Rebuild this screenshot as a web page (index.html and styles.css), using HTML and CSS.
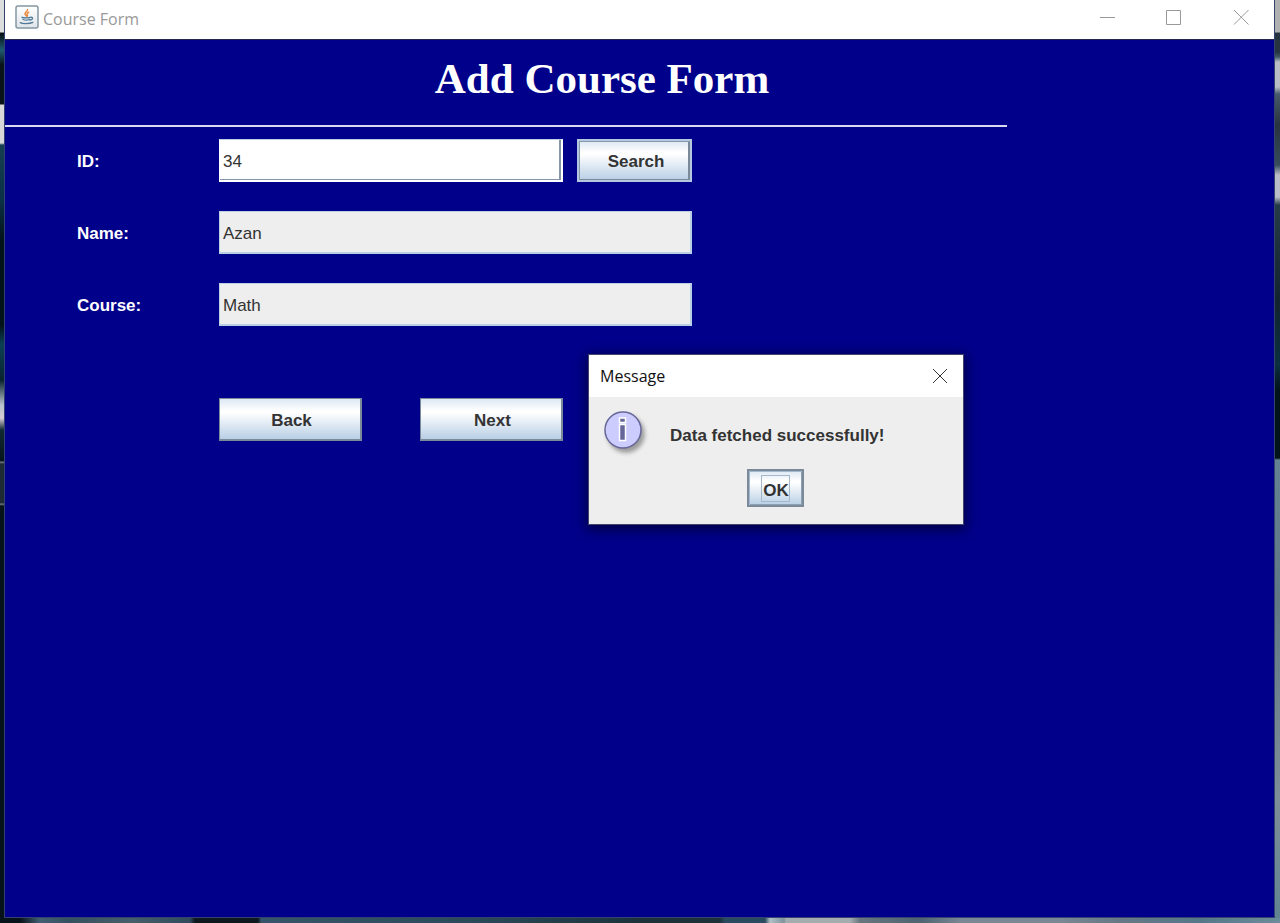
FILE: index.html
```html
<!DOCTYPE html>
<html lang="en">
<head>
<meta charset="utf-8">
<title>Course Form</title>
<link rel="stylesheet" href="styles.css">
</head>
<body>
<main class="window">
  <header class="titlebar">
    <svg class="java" width="24" height="24" viewBox="0 0 24 24" aria-hidden="true">
      <defs><linearGradient id="tile" x1="0" y1="0" x2="0" y2="1"><stop offset="0" stop-color="#fff"/><stop offset="1" stop-color="#dfe5ea"/></linearGradient></defs>
      <rect x="1" y="1" width="22" height="22" rx="2" fill="url(#tile)" stroke="#8496a2" stroke-width="1.5"/>
      <g fill="none" stroke-linecap="round">
        <path d="M12.500 4.500c.5 2-3 2.600-2.500 4.600.3 1 1.200 1.300 1.400 2M13.800 7.300c-1.600.7-2.200 1.500-1.500 2.400.4.6.3 1-.1 1.500" stroke="#e98b3c" stroke-width="1.500"/>
        <path d="M7 12.300c1.500.7 7 .7 8.500 0M8 14.500c1.800.6 5 .6 6.700 0M15.800 12.300c2.600-.4 2.400 2.200-.7 2.800M5.200 17.600c1.400 1.300 9.500 1.500 12.600-.2" stroke="#517b99" stroke-width="1.300"/>
      </g>
    </svg>
    <span class="caption">Course Form</span>
    <button class="control" type="button" aria-label="Minimize"><svg width="16" height="16" viewBox="0 0 16 16"><path d="M1 8.500h15"/></svg></button>
    <button class="control" type="button" aria-label="Maximize"><svg width="16" height="16" viewBox="0 0 16 16"><path d="M.5 1.500h14v14H.5z"/></svg></button>
    <button class="control" type="button" aria-label="Close"><svg width="16" height="16" viewBox="0 0 16 16"><path d="M1 1l14.500 14.500M15.500 1L1 15.500"/></svg></button>
  </header>
  <h1 class="heading">Add Course Form</h1>
  <form class="form">
    <label for="id">ID:</label>
    <div class="search-row">
      <input class="field id-field" id="id" type="text" value="34">
      <button class="button search" type="button">Search</button>
    </div>
    <label for="name">Name:</label>
    <input class="field" id="name" type="text" value="Azan" readonly>
    <label for="course">Course:</label>
    <input class="field" id="course" type="text" value="Math" readonly>
    <div class="actions">
      <button class="button" type="button">Back</button>
      <button class="button" type="button">Next</button>
    </div>
  </form>
</main>
<section class="dialog" role="dialog" aria-labelledby="dialog-title">
  <header class="dialog-bar">
    <span id="dialog-title">Message</span>
    <button class="dialog-close" type="button" aria-label="Close message"><svg width="16" height="16" viewBox="0 0 16 16"><path d="M1 1l14 14M15 1L1 15"/></svg></button>
  </header>
  <div class="dialog-body">
    <svg class="info" width="46" height="46" viewBox="0 0 46 46" aria-hidden="true">
      <circle cx="20" cy="20" r="18" fill="#ccccff" stroke="#666699" stroke-width="1.500"/>
      <path d="M16.500 8h6v4.500h-6zM16.500 14.500h6v16h-6z" fill="#666699" stroke="#fff" stroke-width="1.500"/>
    </svg>
    <p class="message">Data fetched successfully!</p>
    <button class="button ok" type="button"><span class="focus">OK</span></button>
  </div>
</section>
</body>
</html>
```
FILE: styles.css
```css
* { box-sizing: border-box; }

body {
  margin: 0;
  min-height: 100vh;
  padding: 0 5px 5px 4px;
  display: flex;
  font: 17px/20px "Liberation Sans", Arial, sans-serif;
  color: #333;
  background:
    linear-gradient(90deg, #06131a 0 20px, #426074 40px, #35505f 70px, #455e6b 130px, #304c5c 190px, #0d181f 195px 258px, #35566a 261px, #2a4a5a 470px, #1b323b 640px 720px, #284b60 725px 765px, #b2c0c5 770px, #7e949f 784px, #a5acaf 786px 850px, #68767f 860px, #4d6472 920px, #7a8794 960px 1060px, #667886 1120px, #54788a 1200px, #6b8c9a) 0 100% / 100% 5px no-repeat,
    linear-gradient(180deg, #b0b0b0 0 32px, #253440 33px 52px, #3f5965 57px, #b8bcc5 62px 87px, #465b6b 94px, #29343f 125px, #354c5a 165px, #b9bdc8 175px 197px, #253c48 205px, #12242f 300px, #0b3040 365px, #02131a 390px 458px, #638294 460px, #5f7785 600px, #7d8d99 800px, #5f8392) 100% 0 / 6px 100% no-repeat,
    linear-gradient(180deg, #ddd 0 32px, #061014 33px, #1e5b70 50px, #081419 65px 104px, #d8d8d8 105px 143px, #153f52 145px, #0a3145 200px, #03131a 240px 325px, #0b4155 345px, #08242e 380px, #b7c1cc 405px, #d5ccd6 418px, #102b33 430px, #06141a 461px, #777e83 462px, #1e2a34 464px 503px, #777e83 504px, #06131a 506px) 0 0 / 5px 100% no-repeat,
    #06131a;
}

button, input { font: inherit; color: inherit; margin: 0; }

.window {
  flex: 1;
  border: 1px solid #354270;
  border-top: 0;
  background: #00008b;
}

.titlebar {
  height: 40px;
  display: flex;
  align-items: center;
  padding: 0 0 5px 10px;
  border-bottom: 1px solid #26264e;
  background: #fff;
}

.caption {
  flex: 1;
  margin-left: 4px;
  padding-top: 3px;
  font: 16px/24px "Open Sans", sans-serif;
  color: #999;
}

.control, .dialog-close {
  display: grid;
  place-items: center;
  padding: 0;
  border: 0;
  background: none;
  fill: none;
}

.control { width: 67px; height: 34px; stroke: #999; }

.heading {
  max-width: 1002px;
  margin: 0;
  padding: 14px 0 22px 192px;
  border-bottom: 2px solid #d8d8f0;
  font: bold 43px/49px "Liberation Serif", "Times New Roman", serif;
  text-align: center;
  color: #fff;
}

.form {
  display: grid;
  grid-template-columns: 142px minmax(0, 473px);
  align-items: center;
  row-gap: 29px;
  padding: 12px 72px;
}

label { padding-top: 3px; font-weight: bold; color: #fff; }

.search-row { display: flex; gap: 14px; }

.field {
  width: 100%;
  min-width: 0;
  height: 43px;
  padding: 3px 2px 0 3px;
  border: 1px solid #b8cfe5;
  border-width: 1px 2px 2px 1px;
  background: #eee;
  outline: 0;
}

.id-field {
  flex: 1;
  background: #fff;
  border-color: #b8cfe5 #fff #fff;
  box-shadow: inset -2px -1px #8796a6;
}

.button {
  width: 143px;
  height: 43px;
  padding: 3px 0 0 3px;
  border: 1px solid #7a8a99;
  border-width: 1px 2px 2px 1px;
  background: linear-gradient(#dde8f3, #fff 30%, #fff 34%, #b8cfe5);
  font-weight: bold;
}

.search {
  width: 115px;
  border: 2px solid #b3c8e0;
  box-shadow: inset 1px 1px #8a9aab, inset -2px -1px #7a8a99;
}

.actions {
  grid-column: 2;
  display: flex;
  gap: 58px;
  padding-top: 43px;
}

.dialog {
  position: absolute;
  left: 588px;
  top: 354px;
  width: 376px;
  border: 1px solid #44446c;
  background: #eee;
  box-shadow: 0 3px 12px 2px rgba(0, 0, 0, 0.5);
}

.dialog-bar {
  display: flex;
  align-items: center;
  justify-content: space-between;
  height: 42px;
  padding: 0 15px 0 11px;
  background: #fff;
  font: 16px/24px "Open Sans", sans-serif;
  color: #111;
}

.dialog-close { stroke: #333; }

.dialog-body {
  display: grid;
  grid-template-columns: 48px 1fr;
  column-gap: 19px;
  row-gap: 13px;
  padding: 13px 15px 17px 14px;
}

.info { filter: drop-shadow(3px 4px 2px rgba(0, 0, 0, 0.35)); }

.message {
  margin: 0;
  padding-top: 16px;
  font-weight: bold;
}

.ok {
  grid-column: 1 / 3;
  justify-self: center;
  display: grid;
  place-items: center;
  width: 57px;
  height: 38px;
  padding: 0;
  border: 2px solid #7a8a99;
  box-shadow: inset 1px 1px #a3b8cc, inset -1px -1px #8ea1b4;
}

.focus {
  padding: 5px 0 0 1px;
  border: 1px solid #a3b8cc;
}
```
